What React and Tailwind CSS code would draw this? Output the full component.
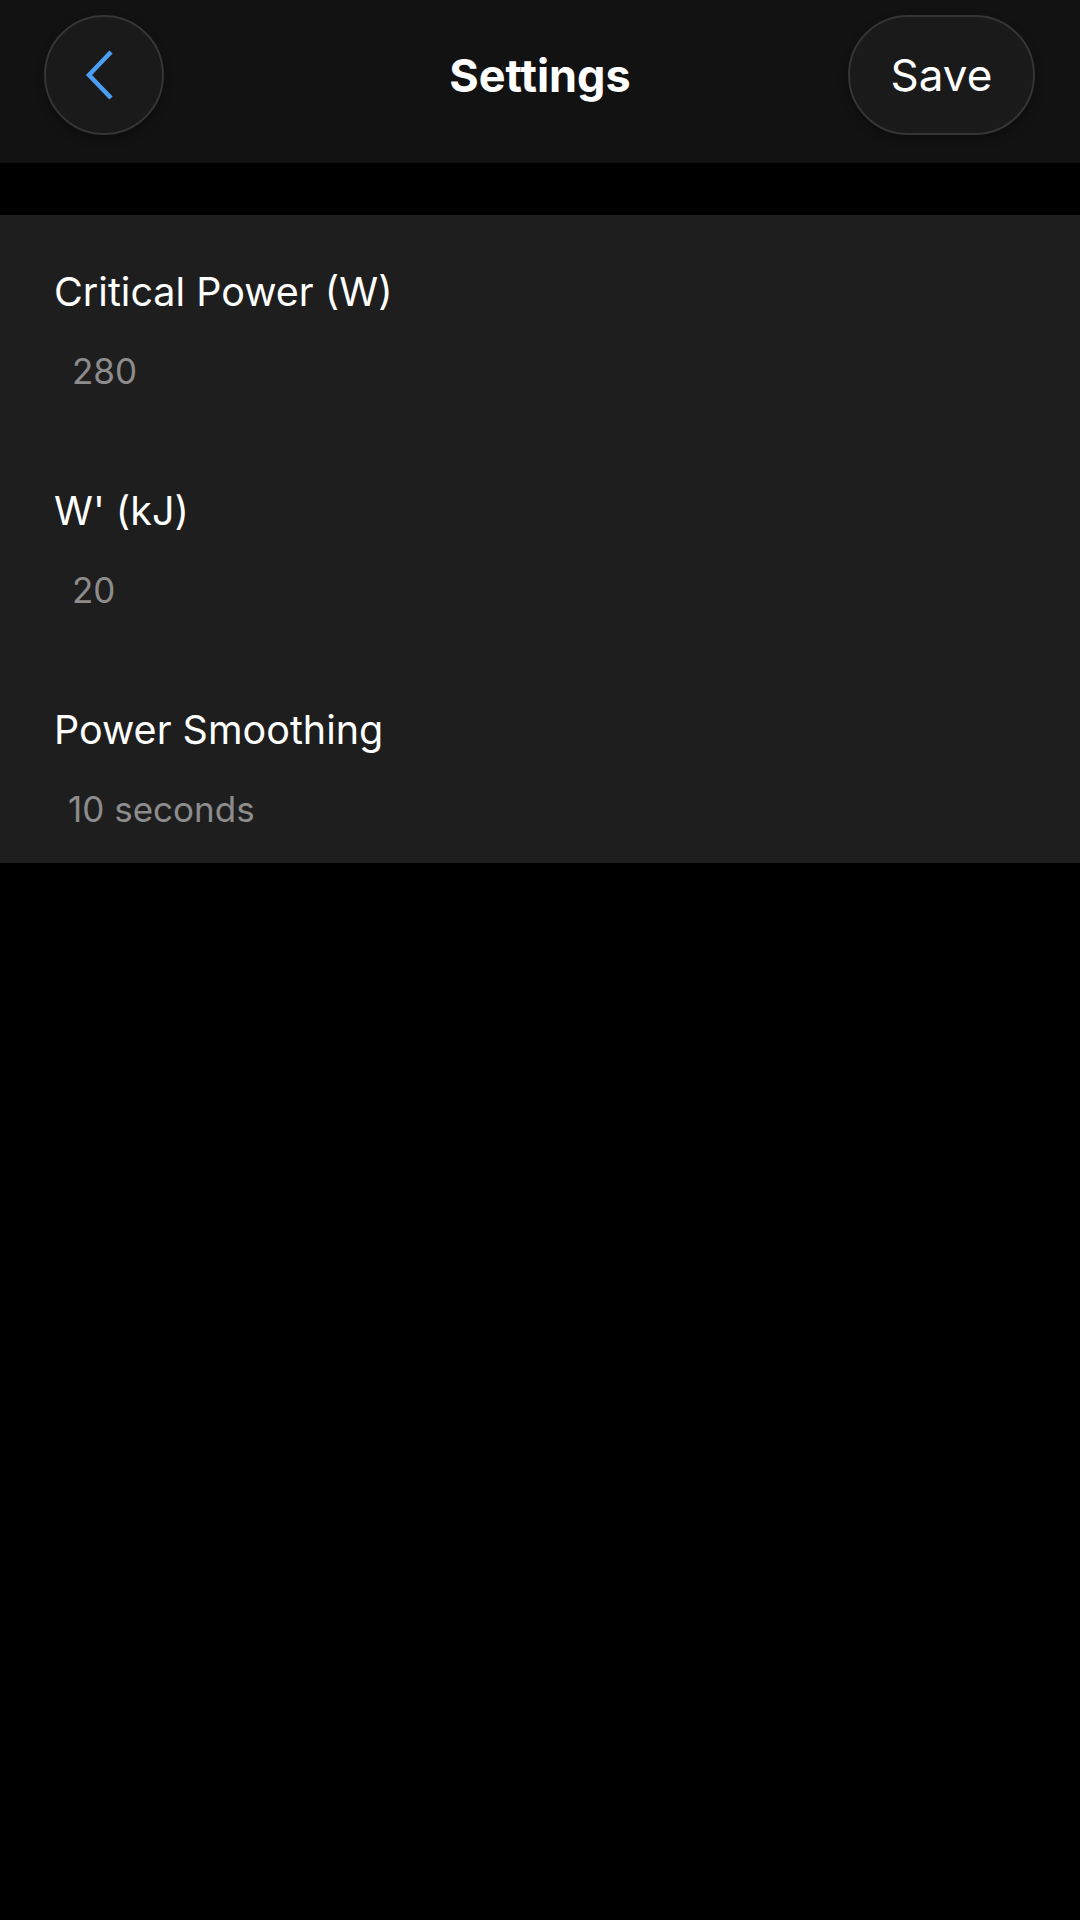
import React, { useState } from "react";

const font = { fontFamily: "Inter, 'Noto Sans', sans-serif" };

function Field({ label, value, indent, bottom }) {
  return (
    <div className={bottom ? "flex flex-col" : "flex flex-col mb-[93px]"}>
      <div className="text-[39.5px] leading-[50px] text-white">{label}</div>
      <div className={`mt-[32px] text-[35px] leading-[44px] text-[#8c8c8c] ${indent}`}>
        {value}
      </div>
    </div>
  );
}

export default function App() {
  const [cp] = useState("280");
  const [wPrime] = useState("20");
  const [smoothing] = useState("10 seconds");

  return (
    <div className="w-[1080px] h-[1920px] bg-black" style={font}>
      {/* header */}
      <div className="h-[163px] bg-[#121212] flex items-start justify-between pt-[15px] pl-[44px] pr-[45px] relative">
        <button className="w-[120px] h-[120px] rounded-full bg-[#1a1a1a] border-2 border-[#353535] flex items-center justify-center shadow-[0_4px_10px_rgba(0,0,0,0.35)]">
          <svg width="40" height="60" viewBox="0 0 40 60" fill="none">
            <path d="M27 7 L5 30 L27 53" stroke="#4a9ff5" strokeWidth="4.5" strokeLinecap="butt" strokeLinejoin="miter" />
          </svg>
        </button>
        <div className="absolute left-1/2 top-[15px] -translate-x-1/2 h-[120px] flex items-center text-[45px] font-bold text-white leading-none">
          Settings
        </div>
        <button className="w-[187px] h-[120px] rounded-full bg-[#1a1a1a] border-2 border-[#353535] text-[44px] text-white leading-none shadow-[0_4px_10px_rgba(0,0,0,0.35)]">
          Save
        </button>
      </div>

      <div className="h-[52px] bg-black" />

      {/* settings panel */}
      <div className="bg-[#1e1e1e] pl-[54px] pt-[52px] pb-[32px]">
        <Field label="Critical Power (W)" value={cp} indent="pl-[18px]" />
        <Field label="W' (kJ)" value={wPrime} indent="pl-[18px]" />
        <Field label="Power Smoothing" value={smoothing} indent="pl-[14px]" bottom />
      </div>
    </div>
  );
}
